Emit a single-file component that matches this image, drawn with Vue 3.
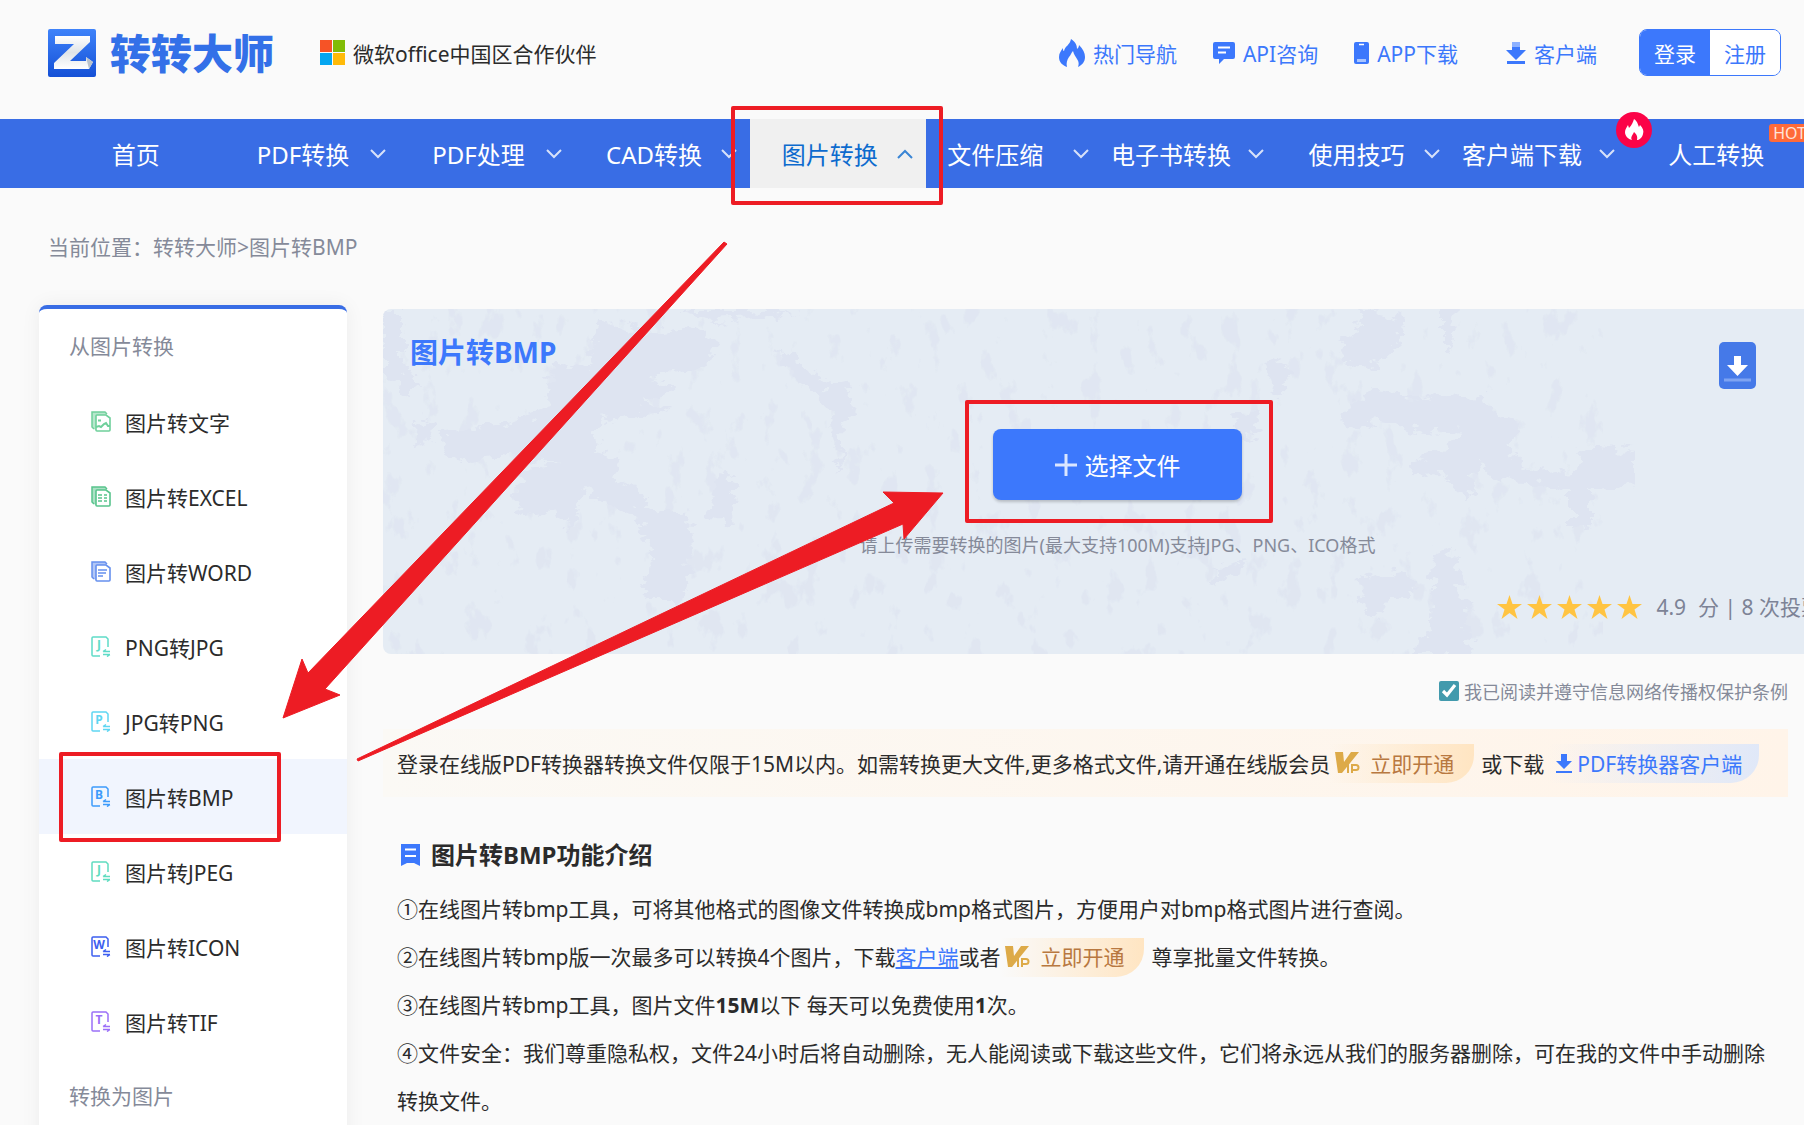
<template>
  <div class="page">
    <!-- 顶部 -->
    <header class="top">
      <a class="logo" href="#">
        <svg class="logo-mark" viewBox="0 0 48 48" aria-hidden="true">
          <defs>
            <linearGradient id="logoBg" x1="0" y1="0" x2="0" y2="1">
              <stop offset="0" stop-color="#3f83fa" />
              <stop offset="1" stop-color="#1450d6" />
            </linearGradient>
            <linearGradient id="logoZ" x1="0" y1="0" x2="0" y2="1">
              <stop offset="0" stop-color="#ffffff" />
              <stop offset="0.5" stop-color="#dfe4e8" />
              <stop offset="1" stop-color="#ffffff" />
            </linearGradient>
          </defs>
          <rect width="48" height="48" rx="2" fill="url(#logoBg)" />
          <path d="M7 7h35v6L22 32h16v-4l7 5-4 7H6v-6l20-19H7z" fill="url(#logoZ)" />
          <path d="M38 28l7 5-4 7z" fill="#b9c2cc" />
        </svg>
        <span class="logo-text">转转大师</span>
      </a>
      <div class="partner">
        <svg viewBox="0 0 25 25" aria-hidden="true">
          <path d="M0 0h12v12H0z" fill="#f65326" />
          <path d="M13 0h12v12H13z" fill="#81bc06" />
          <path d="M0 13h12v12H0z" fill="#05a6f0" />
          <path d="M13 13h12v12H13z" fill="#ffba08" />
        </svg>
        <span>微软office中国区合作伙伴</span>
      </div>
      <div class="top-links">
        <a class="top-link hot" href="#">
          <svg width="26" height="28" viewBox="0 0 26 28" aria-hidden="true">
            <path d="M12 0c5 3 6 7 6 10 1-1 2-2 2-4 4 4 6 8 6 12 0 5-3 8-7 10 1-3 1-5-1-8-1-2-3-4-4-8-2 2-2 4-4 6-2 3-3 6-2 10-5-2-8-5-8-10 0-4 2-6 4-9 0 2 0 3 1 3 1-5 6-6 7-12z" fill="currentColor" />
          </svg>
          热门导航
        </a>
        <a class="top-link api" href="#">
          <svg width="22" height="22" viewBox="0 0 22 22" aria-hidden="true">
            <path d="M2 0h18a2 2 0 0 1 2 2v13a2 2 0 0 1-2 2h-9l-5 5v-5H2a2 2 0 0 1-2-2V2a2 2 0 0 1 2-2z" fill="currentColor" />
            <path d="M5 5.500h12M5 10.500h8" stroke="#fff" stroke-width="2" />
          </svg>
          API咨询
        </a>
        <a class="top-link app" href="#">
          <svg width="15" height="22" viewBox="0 0 15 22" aria-hidden="true">
            <rect width="15" height="22" rx="2" fill="currentColor" />
            <path d="M5 2.500h5" stroke="#fff" stroke-width="1.500" />
            <path d="M3 18.500h9" stroke="#a9c5ff" stroke-width="3" />
          </svg>
          APP下载
        </a>
        <a class="top-link client" href="#">
          <svg width="20" height="22" viewBox="0 0 20 22" aria-hidden="true">
            <path d="M6 0h8v5H6z" fill="#8db1ff" />
            <path d="M6 5h8v3h6L10 18 0 8h6z" fill="currentColor" />
            <path d="M1 20.500h18" stroke="currentColor" stroke-width="3" />
          </svg>
          客户端
        </a>
      </div>
      <div class="auth">
        <button class="login" type="button">登录</button>
        <button class="register" type="button">注册</button>
      </div>
    </header>

    <!-- 导航 -->
    <nav class="nav">
      <a
        v-for="item in navItems"
        :key="item.text"
        :class="['nav-item', { active: item.active, tight: item.tight, plain: !item.arrow }]"
        href="#"
      >
        <span class="nav-text">{{ item.text }}</span>
        <svg v-if="item.arrow" class="chevron" viewBox="0 0 16 10" aria-hidden="true">
          <path d="M1 1l7 7 7-7" fill="none" stroke="currentColor" stroke-width="2" />
        </svg>
        <svg v-if="item.badge === 'fire'" class="fire-badge" viewBox="0 0 36 36" aria-hidden="true">
          <circle cx="18" cy="18" r="18" fill="#fb0347" />
          <path d="M18 7c4 3 4 6 5 8l1-2c3 3 4 6 3 9-1 4-4 6-6 6 1-4-1-6-3-8-1 3-4 5-2 8-4-1-7-4-7-8 0-3 2-5 3-7l1 3c3-3 4-6 5-9z" fill="#fff" />
        </svg>
        <span v-if="item.badge === 'hot'" class="hot-badge">HOT</span>
      </a>
    </nav>

    <div class="crumbs">当前位置：<a href="#">转转大师</a>&gt;<a href="#">图片转BMP</a></div>

    <div class="body">
      <!-- 左侧菜单 -->
      <aside class="sidebar">
        <h3 class="side-title">从图片转换</h3>
        <a
          v-for="item in sideItems"
          :key="item.text"
          :class="['side-item', { active: item.active }]"
          :style="{ '--icon': item.color }"
          href="#"
        >
          <svg v-if="item.kind" class="side-icon" viewBox="0 0 20 21" aria-hidden="true">
            <path d="M1 1h13l2 3H6v16l-3-2-2-2z" fill="currentColor" opacity=".5" />
            <path d="M3 18l-2-2V1h13l2 2" fill="none" stroke="currentColor" stroke-width="1.500" />
            <path d="M6 4h9l4 3v12a1 1 0 0 1-1 1H6a1 1 0 0 1-1-1V5a1 1 0 0 1 1-1z" fill="#fff" stroke="currentColor" stroke-width="1.600" />
            <path v-if="item.kind === 'image'" d="M7 9.500h3M5 16l3-1 2 1 3-3 2-1 2 3h2" fill="none" stroke="currentColor" stroke-width="2" />
            <path v-if="item.kind === 'sheet'" d="M7 9h4M7 12h4M7 15h4M13 9h3M13 12h3M13 15h3" stroke="currentColor" stroke-width="1.500" />
            <path v-if="item.kind === 'doc'" d="M7 9h9M7 12h8M7 15h5" stroke="currentColor" stroke-width="1.500" />
          </svg>
          <svg v-else class="side-icon" viewBox="0 0 20 21" aria-hidden="true">
            <path d="M17 11V3l-2-2H2a1 1 0 0 0-1 1v17a1 1 0 0 0 1 1h7" fill="none" stroke="currentColor" stroke-width="1.500" />
            <path d="M12 15.500h7M12 15.500l3-2M19 18.500h-7M19 18.500l-3 2" stroke="currentColor" stroke-width="1.500" />
            <text x="8" y="13" text-anchor="middle" font-size="12" font-weight="700" fill="currentColor">{{ item.letter }}</text>
          </svg>
          <span>{{ item.text }}</span>
        </a>
        <h3 class="side-title">转换为图片</h3>
      </aside>

      <main class="main">
        <!-- 上传区 -->
        <section class="upload">
          <svg class="texture" viewBox="0 0 1469 345" preserveAspectRatio="none" aria-hidden="true">
            <defs>
              <filter id="rough" x="0" y="0" width="100%" height="100%" color-interpolation-filters="sRGB">
                <feTurbulence type="fractalNoise" baseFrequency="0.06 0.1" numOctaves="4" seed="8" result="n" />
                <feDisplacementMap in="SourceGraphic" in2="n" scale="26" xChannelSelector="R" yChannelSelector="G" />
              </filter>
              <filter id="specks" x="0" y="0" width="100%" height="100%" color-interpolation-filters="sRGB">
                <feTurbulence type="fractalNoise" baseFrequency="0.05 0.03" numOctaves="4" seed="21" />
                <feColorMatrix values="0 0 0 0 0.870  0 0 0 0 0.894  0 0 0 0 0.945  0 0 0 12 -7.500" />
              </filter>
            </defs>
            <rect width="1220" height="345" filter="url(#specks)" opacity=".7" />
            <g fill="#dee4f1" filter="url(#rough)">
              <path d="M215 11l50 12 45-5 22 16-5 18-18 10-45 10 30 7-30 13 25 10-72 10-8 30 30 7-8 23 32 7 4 23 36 4 4 46-8 40h-32l-8-16 13-30-17-40-36-13-18-14-14 50-9-30-36 7-13-17 13-30 32-3-45-10-45 4-4 6-18-13-4-17 36-7 66-13 9-46 40-7z" />
              <path d="M300 0h60l60 2-40 6-50 3zM0 2h18v50l14 20-8 14-24-20zM395 40l25 12 25 26-12 8-26-16zM435 80l28-8 8 30-10 14-6 50-8-60zM335 165l20 10-8 40-20-10zM35 110l16 4-4 20-14 4z" />
              <path d="M988 84l51 4 60-3 14 20 23 10-9 23 23 27 37-3 18-24 47 4v36l-42 4v33l-23 3v-36l-37-9-37-1-18-20-10 40-13-20-46-10 4-10 37-14 5-13-88-12-9 12-19-17z" />
              <path d="M974 1l46 6-4 28-24 23-32-7-5-16 24-17zM1058 0h15l-4 42-11-4zM883 58l16-8 8 30-14 8zM850 110l24-6 4 20-24 10zM1050 244l18-6 14 50 6 57h-60l20-30zM975 270l50-8 10 20-30 10-10 16-16-12zM830 260l34-8-30 26z" />
            </g>
          </svg>
          <h1 class="upload-title">图片转BMP</h1>
          <a class="qr-btn" href="#" aria-label="下载">
            <svg viewBox="0 0 37 47" aria-hidden="true">
              <rect width="37" height="47" rx="5" fill="#4579e8" />
              <path d="M15 14h7v9h7l-10.500 11L8 23h7z" fill="#fff" />
              <path d="M5 38h27" stroke="#7ea3f2" stroke-width="3" />
            </svg>
          </a>
          <button class="pick" type="button">
            <svg width="22" height="22" viewBox="0 0 22 22" aria-hidden="true">
              <path d="M11 0v22M0 11h22" stroke="#dbe6ff" stroke-width="3" />
            </svg>
            选择文件
          </button>
          <p class="hint">请上传需要转换的图片(最大支持100M)支持JPG、PNG、ICO格式</p>
          <div class="rating">
            <span class="stars">
              <svg v-for="n in 5" :key="n" viewBox="0 0 25 24" aria-hidden="true">
                <path d="M12.500 0l3 9H25l-7.500 5.500 3 9.500-8-6-8 6 3-9.500L0 9h9.500z" fill="#ffc442" />
              </svg>
            </span>
            <span class="score">4.9</span>
            <span>分 | 8 次投票</span>
          </div>
        </section>

        <label class="agree">
          <input v-model="agreed" type="checkbox" />
          我已阅读并遵守信息网络传播权保护条例
        </label>

        <!-- 会员提示 -->
        <div class="vip-bar">
          <span>登录在线版PDF转换器转换文件仅限于15M以内。如需转换更大文件,更多格式文件,请开通在线版会员</span>
          <a class="vip" href="#">
            <svg viewBox="0 0 26 22" aria-hidden="true">
              <path d="M0 0h8l1 10 7-10h8L7 21H3z" fill="#ddaa48" />
              <path d="M13 12v9M17 21v-8h4a2 2 0 0 1 0 5h-4" fill="none" stroke="#ddaa48" stroke-width="2" />
            </svg>
            立即开通
          </a>
          <span>或下载</span>
          <a class="pdf-client" href="#">
            <svg viewBox="0 0 16 19" aria-hidden="true">
              <path d="M5 0h6v7h5l-8 8-8-8h5z" fill="currentColor" />
              <path d="M0 18h16" stroke="currentColor" stroke-width="2" />
            </svg>
            PDF转换器客户端
          </a>
        </div>

        <!-- 功能介绍 -->
        <section class="intro">
          <h2>
            <svg viewBox="0 0 21 22" aria-hidden="true">
              <path d="M1 0h19v22l-6-3h-7l-6 3z" fill="#3c78fc" />
              <path d="M5 5.500h11M5 12h11" stroke="#fff" stroke-width="2" />
            </svg>
            图片转BMP功能介绍
          </h2>
          <p>①在线图片转bmp工具，可将其他格式的图像文件转换成bmp格式图片，方便用户对bmp格式图片进行查阅。</p>
          <p class="with-vip">
            <span>②在线图片转bmp版一次最多可以转换4个图片，下载<a class="link" href="#">客户端</a>或者</span>
            <a class="vip" href="#">
              <svg viewBox="0 0 26 22" aria-hidden="true">
                <path d="M0 0h8l1 10 7-10h8L7 21H3z" fill="#ddaa48" />
                <path d="M13 12v9M17 21v-8h4a2 2 0 0 1 0 5h-4" fill="none" stroke="#ddaa48" stroke-width="2" />
              </svg>
              立即开通
            </a>
            <span>尊享批量文件转换。</span>
          </p>
          <p>③在线图片转bmp工具，图片文件<b>15M</b>以下 每天可以免费使用<b>1</b>次。</p>
          <p>④文件安全：我们尊重隐私权，文件24小时后将自动删除，无人能阅读或下载这些文件，它们将永远从我们的服务器删除，可在我的文件中手动删除转换文件。</p>
        </section>
      </main>
    </div>

    <!-- 操作指引标注 -->
    <svg class="marks" width="1804" height="1125" viewBox="0 0 1804 1125" aria-hidden="true">
      <g fill="none" stroke="#ed1c24" stroke-width="4" stroke-linejoin="round">
        <rect x="733" y="108" width="208" height="95" />
        <rect x="61" y="754" width="218" height="86" />
        <rect x="967" y="402" width="304" height="119" />
      </g>
      <g fill="#ed1c24" stroke="#ed1c24" stroke-linejoin="round">
        <path d="M724 242l3 2L325 689l15 6-57 23 19-59 6 14z" />
        <path d="M357 759l537-256-11-11 60 1-39 46-1-15-545 237z" />
      </g>
    </svg>
  </div>
</template>

<script setup>
import { ref } from 'vue'

const agreed = ref(true)

// 导航
const navItems = [
  { text: '首页' },
  { text: 'PDF转换', arrow: true },
  { text: 'PDF处理', arrow: true },
  { text: 'CAD转换', arrow: true },
  { text: '图片转换', arrow: true, active: true },
  { text: '文件压缩', arrow: true, tight: true },
  { text: '电子书转换', arrow: true, tight: true },
  { text: '使用技巧', arrow: true },
  { text: '客户端下载', arrow: true, tight: true, badge: 'fire' },
  { text: '人工转换', badge: 'hot' }
]

// 左侧菜单
const sideItems = [
  { text: '图片转文字', kind: 'image', color: '#6fd09b' },
  { text: '图片转EXCEL', kind: 'sheet', color: '#58c48c' },
  { text: '图片转WORD', kind: 'doc', color: '#6690ee' },
  { text: 'PNG转JPG', letter: 'J', color: '#5fdcc8' },
  { text: 'JPG转PNG', letter: 'P', color: '#5fd6f2' },
  { text: '图片转BMP', letter: 'B', color: '#3d9bfb', active: true },
  { text: '图片转JPEG', letter: 'J', color: '#5fdcc0' },
  { text: '图片转ICON', letter: 'W', color: '#3d5ff0' },
  { text: '图片转TIF', letter: 'T', color: '#9b70f8' }
]
</script>

<style>
body {
  margin: 0;
  background: #fafafa;
}
</style>

<style scoped>
.page {
  position: relative;
  height: 100vh;
  overflow: hidden;
  font-family: 'Noto Sans', 'Noto Sans CJK SC', sans-serif;
  font-size: 21px;
  color: #2b2b2b;
}

.page * {
  box-sizing: border-box;
}

a {
  color: inherit;
  text-decoration: none;
}

button {
  font: inherit;
  cursor: pointer;
}

h1,
h2,
h3,
p {
  margin: 0;
}

svg {
  flex-shrink: 0;
}

/* 顶部 */
.top {
  display: flex;
  align-items: center;
  height: 119px;
  padding: 0 23px 14px 48px;
}

.logo {
  display: flex;
  align-items: center;
  gap: 14px;
}

.logo-mark {
  width: 48px;
  height: 48px;
}

.logo-text {
  font-size: 41px;
  line-height: 48px;
  font-weight: 900;
  color: #3370e8;
}

.partner {
  display: flex;
  align-items: center;
  gap: 8px;
  margin-left: 46px;
}

.partner svg {
  width: 25px;
  height: 25px;
}

.top-links {
  display: flex;
  align-items: center;
  gap: 36px;
  margin-left: auto;
  color: #3c78fc;
}

.top-link {
  display: flex;
  align-items: center;
  gap: 8px;
}

.client {
  margin-left: 12px;
}

.auth {
  display: flex;
  width: 142px;
  height: 47px;
  margin-left: 42px;
  border: 1px solid #3c78fc;
  border-radius: 8px;
  overflow: hidden;
}

.auth button {
  flex: 1;
  padding: 0;
  border: none;
  background: #fff;
  color: #3c78fc;
}

.auth .login {
  background: #3c78fc;
  color: #fff;
}

/* 导航 */
.nav {
  display: grid;
  grid-template-columns: repeat(10, minmax(0, 1fr));
  height: 69px;
  padding-left: 48px;
  background: #396de5;
  color: #fff;
  font-size: 24px;
}

.nav-item {
  position: relative;
  display: flex;
  align-items: center;
  padding: 0 13px 0 12px;
  white-space: nowrap;
}

.nav-item.tight {
  padding-left: 0;
}

.nav-item.tight .nav-text {
  margin-right: 8px;
}

.nav-item.plain {
  padding: 0;
}

.nav-item.active {
  background: #f0f0f0;
  color: #0d6bce;
}

.nav-text {
  flex: 1;
  text-align: center;
}

.chevron {
  width: 16px;
  height: 10px;
  opacity: 0.8;
}

.active .chevron {
  transform: rotate(180deg);
}

.fire-badge {
  position: absolute;
  top: -7px;
  right: -24px;
  z-index: 1;
  width: 36px;
  height: 36px;
}

.hot-badge {
  position: absolute;
  top: 5px;
  right: -6px;
  padding: 0 4px;
  border-radius: 3px;
  background: #ff6a39;
  color: #ffe3d8;
  font-size: 16px;
  line-height: 18px;
}

/* 面包屑 */
.crumbs {
  padding: 43px 48px 0;
  line-height: 32px;
  color: #858a99;
}

/* 主体 */
.body {
  display: flex;
  gap: 36px;
  margin: 42px -48px 0 39px;
}

.sidebar {
  flex: 0 0 308px;
  height: 900px;
  border-top: 4px solid #396de5;
  border-radius: 8px 8px 0 0;
  background: #fff;
  box-shadow: 0 0 20px rgba(0, 0, 0, 0.06);
}

.side-title {
  padding-left: 30px;
  font-size: 21px;
  font-weight: 400;
  line-height: 75px;
  color: #858a99;
}

.side-item {
  display: flex;
  align-items: center;
  gap: 14px;
  height: 75px;
  padding-left: 52px;
}

.side-item.active {
  background: #f1f5fe;
}

.side-icon {
  width: 20px;
  height: 21px;
  color: var(--icon);
}

.main {
  flex: 1;
  min-width: 0;
  padding-top: 4px;
}

/* 上传区 */
.upload {
  position: relative;
  display: flex;
  flex-direction: column;
  align-items: center;
  height: 345px;
  border-radius: 8px;
  background: #e5ecf4;
  overflow: hidden;
}

.texture {
  position: absolute;
  inset: 0;
  width: 100%;
  height: 100%;
}

.upload-title {
  position: relative;
  align-self: flex-start;
  padding: 23px 0 0 27px;
  font-size: 28px;
  line-height: 40px;
  color: #3c78fc;
}

.qr-btn {
  position: absolute;
  top: 33px;
  right: 96px;
  width: 37px;
  height: 47px;
}

.qr-btn svg {
  display: block;
}

.pick {
  position: relative;
  display: flex;
  align-items: center;
  justify-content: center;
  gap: 8px;
  width: 249px;
  height: 71px;
  margin-top: 57px;
  border: none;
  border-radius: 8px;
  background: #3c78fc;
  box-shadow: 0 2px 3px rgba(0, 0, 0, 0.2);
  color: #fff;
  font-size: 24px;
}

.hint {
  position: relative;
  margin-top: 30px;
  font-size: 18px;
  line-height: 30px;
  color: #858a99;
}

.rating {
  position: relative;
  display: flex;
  align-items: center;
  align-self: flex-end;
  margin: 31px 30px 0 0;
  line-height: 32px;
  color: #7d8396;
  white-space: nowrap;
}

.stars {
  display: flex;
  gap: 5px;
}

.stars svg {
  width: 25px;
  height: 24px;
}

.score {
  margin: 0 12px 0 14px;
}

.agree {
  display: flex;
  align-items: center;
  justify-content: flex-end;
  gap: 5px;
  height: 75px;
  padding: 0 64px 2px 0;
  font-size: 18px;
  color: #858a99;
}

.agree input {
  width: 20px;
  height: 20px;
  margin: 0;
  accent-color: #429aad;
}

/* 会员提示 */
.vip-bar {
  display: flex;
  align-items: center;
  height: 68px;
  margin-right: 64px;
  padding-left: 14px;
  background: linear-gradient(90deg, #fbf9f5, #fff4e9);
  white-space: nowrap;
}

.vip,
.pdf-client {
  display: inline-flex;
  align-items: center;
  height: 39px;
  border-bottom-right-radius: 28px;
}

.vip {
  gap: 9px;
  margin-right: 7px;
  padding: 0 20px 0 5px;
  background: linear-gradient(90deg, rgba(255, 229, 194, 0), #ffe5c2);
  color: #b87840;
}

.vip svg {
  width: 26px;
  height: 22px;
}

.pdf-client {
  gap: 5px;
  margin-left: 4px;
  padding: 0 17px 0 8px;
  background: linear-gradient(90deg, rgba(224, 232, 248, 0), #e0e8f8);
  color: #3c78fc;
}

.pdf-client svg {
  width: 16px;
  height: 19px;
}

/* 功能介绍 */
.intro {
  padding: 34px 80px 0 14px;
}

.intro h2 {
  display: flex;
  align-items: center;
  gap: 10px;
  padding: 0 0 6px 3px;
  font-size: 24px;
  line-height: 48px;
}

.intro h2 svg {
  width: 21px;
  height: 22px;
}

.intro p {
  line-height: 48px;
}

.with-vip {
  display: flex;
  align-items: center;
}

.link {
  color: #3c78fc;
  text-decoration: underline;
}

/* 标注 */
.marks {
  position: absolute;
  top: 0;
  left: 0;
  z-index: 5;
  pointer-events: none;
}
</style>
